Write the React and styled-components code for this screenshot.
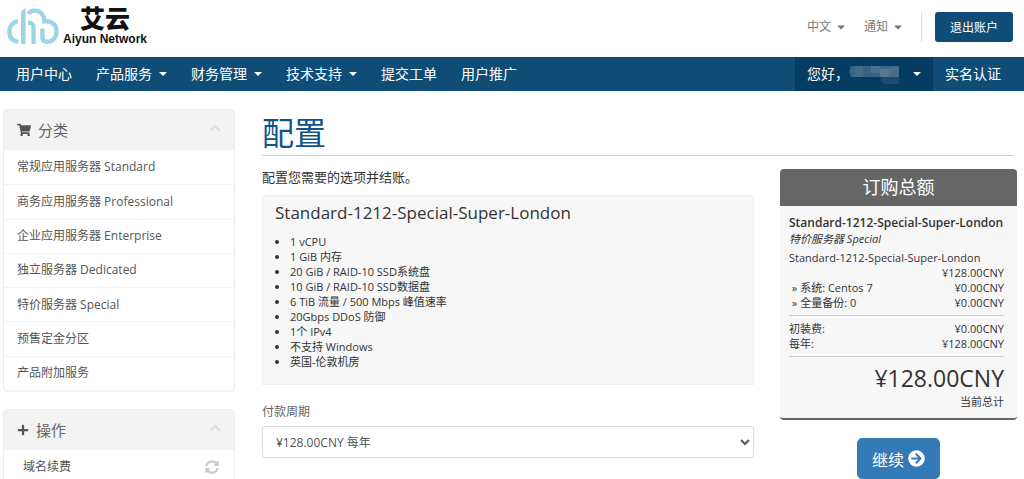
import React, { useState } from "react";
import styled, { createGlobalStyle } from "styled-components";
import {
  FaShoppingCart,
  FaPlus,
  FaSyncAlt,
  FaArrowCircleRight,
  FaChevronUp,
  FaCaretDown,
} from "react-icons/fa";

const categories = [
  "常规应用服务器 Standard",
  "商务应用服务器 Professional",
  "企业应用服务器 Enterprise",
  "独立服务器 Dedicated",
  "特价服务器 Special",
  "预售定金分区",
  "产品附加服务",
];

const menu = [
  { label: "用户中心" },
  { label: "产品服务", caret: true },
  { label: "财务管理", caret: true },
  { label: "技术支持", caret: true },
  { label: "提交工单" },
  { label: "用户推广" },
];

const specs = [
  "1 vCPU",
  "1 GiB 内存",
  "20 GiB / RAID-10 SSD系统盘",
  "10 GiB / RAID-10 SSD数据盘",
  "6 TiB 流量 / 500 Mbps 峰值速率",
  "20Gbps DDoS 防御",
  "1个 IPv4",
  "不支持 Windows",
  "英国-伦敦机房",
];

function Logo() {
  return (
    <Brand href="#">
      <svg width="53" height="38" viewBox="0 0 53 38" fill="none" stroke="#9bd5e7" strokeWidth="4.4">
        <path d="M11 13.2 C5 14 2.4 19 2.4 24 C2.4 29.5 6 33.4 11.5 33.9" />
        <path d="M14 3.5 L18.6 0 V36 H14 Z" fill="#9bd5e7" stroke="none" />
        <path d="M21.2 5.8 C24 2 33 0 37 9.5 L37.4 13.4 C45 12.4 49.6 17 49.6 23.5 C49.6 29.5 45.5 33.8 39.8 33.8" />
        <path d="M21 14.5 C26 14.5 26.6 17 26.6 21 V36" />
        <path d="M35.4 20.5 V30 Q35.6 33.8 40 33.8" />
      </svg>
      <BrandName>
        <strong>艾云</strong>
        <span>Aiyun Network</span>
      </BrandName>
    </Brand>
  );
}

function HiddenName() {
  return (
    <svg width="50" height="22" viewBox="0 0 50 22">
      <path d="M2 3 H50 V14 H2 Q-1 9 2 3Z" fill="#3a6282" />
      <rect x="6" y="3" width="8" height="11" fill="#456b89" />
      <rect x="22" y="3" width="9" height="7" fill="#4c718d" />
      <rect x="31" y="6" width="9" height="8" fill="#55778f" />
      <rect x="40" y="4" width="10" height="11" fill="#486e8b" />
      <path d="M32 14 H50 V21 H35 Q31 19 32 14Z" fill="#1d4b70" />
    </svg>
  );
}

function App() {
  const [cycle, setCycle] = useState("year");

  return (
    <>
      <GlobalStyle />
      <Header>
        <Logo />
        <TopNav>
          <TopLink href="#">中文 <FaCaretDown /></TopLink>
          <TopLink href="#">通知 <FaCaretDown /></TopLink>
          <LogoutBox>
            <LogoutButton>退出账户</LogoutButton>
          </LogoutBox>
        </TopNav>
      </Header>

      <NavBar>
        <NavGroup>
          {menu.map((item) => (
            <NavLink href="#" key={item.label}>
              {item.label}
              {item.caret && <Caret />}
            </NavLink>
          ))}
        </NavGroup>
        <NavGroup>
          <NavLink href="#" $active>
            您好，<HiddenName />
            <Caret $wide />
          </NavLink>
          <NavLink href="#">实名认证</NavLink>
        </NavGroup>
      </NavBar>

      <Body>
        <Sidebar>
          <Panel>
            <PanelHead>
              <FaShoppingCart />
              <h3>分类</h3>
              <Chevron />
            </PanelHead>
            <PanelList>
              {categories.map((name) => (
                <PanelLink href="#" key={name}>{name}</PanelLink>
              ))}
            </PanelList>
          </Panel>
          <Panel>
            <PanelHead>
              <FaPlus size="12" />
              <h3>操作</h3>
              <Chevron />
            </PanelHead>
            <PanelLink href="#" $indent>
              域名续费 <FaSyncAlt />
            </PanelLink>
          </Panel>
        </Sidebar>

        <Main>
          <Title>配置</Title>
          <Columns>
            <Config>
              <Intro>配置您需要的选项并结账。</Intro>
              <Product>
                <h2>Standard-1212-Special-Super-London</h2>
                <ul>
                  {specs.map((spec) => (
                    <li key={spec}>{spec}</li>
                  ))}
                </ul>
              </Product>
              <Label htmlFor="cycle">付款周期</Label>
              <Select id="cycle" value={cycle} onChange={(e) => setCycle(e.target.value)}>
                <option value="year">¥128.00CNY 每年</option>
              </Select>
            </Config>

            <SummaryColumn>
              <Summary>
                <h2>订购总额</h2>
                <SummaryBody>
                  <ProductName>Standard-1212-Special-Super-London</ProductName>
                  <ProductGroup>特价服务器 Special</ProductGroup>
                  <Line>
                    <span>Standard-1212-Special-Super-London</span>
                    <Price>¥128.00CNY</Price>
                  </Line>
                  <Line>
                    <span>&nbsp;» 系统: Centos 7</span>
                    <Price>¥0.00CNY</Price>
                  </Line>
                  <Line>
                    <span>&nbsp;» 全量备份: 0</span>
                    <Price>¥0.00CNY</Price>
                  </Line>
                  <Fees>
                    <Line>
                      <span>初装费:</span>
                      <Price>¥0.00CNY</Price>
                    </Line>
                    <Line>
                      <span>每年:</span>
                      <Price>¥128.00CNY</Price>
                    </Line>
                  </Fees>
                  <Total>
                    <strong>¥128.00CNY</strong>
                    <span>当前总计</span>
                  </Total>
                </SummaryBody>
              </Summary>
              <ContinueButton>
                继续 <FaArrowCircleRight size="17" />
              </ContinueButton>
            </SummaryColumn>
          </Columns>
        </Main>
      </Body>
    </>
  );
}

export default App;

const GlobalStyle = createGlobalStyle`
  * {
    box-sizing: border-box;
  }

  html {
    scrollbar-width: none;
  }

  body {
    margin: 0;
    background: #fff;
    color: #333;
    font-family: "Open Sans", "Noto Sans CJK SC", sans-serif;
    font-size: 12px;
    line-height: 18px;
  }

  h1, h2, h3, p, ul {
    margin: 0;
    font-weight: 400;
  }

  a {
    color: inherit;
    text-decoration: none;
  }

  button, select {
    font-family: inherit;
  }
`;

const Header = styled.header`
  display: flex;
  justify-content: space-between;
  align-items: center;
  height: 57px;
  padding: 0 11px 4px 7px;
`;

const Brand = styled.a`
  display: flex;
  align-items: center;
  gap: 3px;
`;

const BrandName = styled.span`
  display: flex;
  flex-direction: column;
  align-items: center;
  color: #111;

  strong {
    font-size: 25px;
    font-weight: 900;
    line-height: 25px;
  }

  span {
    font-family: "Liberation Sans", sans-serif;
    font-size: 12px;
    font-weight: 700;
    line-height: 16px;
  }
`;

const TopNav = styled.div`
  display: flex;
  align-items: center;
`;

const TopLink = styled.a`
  display: flex;
  align-items: center;
  gap: 4px;
  margin-right: 17px;
  color: #777;
`;

const LogoutBox = styled.div`
  padding-left: 13px;
  border-left: 1px solid #ddd;
`;

const LogoutButton = styled.button`
  display: block;
  height: 30px;
  padding: 0 15px;
  border: 0;
  border-radius: 3px;
  background: #0f4d77;
  color: #fff;
  font-size: 12px;
`;

const NavBar = styled.nav`
  display: flex;
  justify-content: space-between;
  height: 34px;
  padding: 0 11px 0 4px;
  background: #0f4d77;
`;

const NavGroup = styled.div`
  display: flex;
`;

const NavLink = styled.a`
  display: flex;
  align-items: center;
  padding: 0 12px;
  background: ${(props) => (props.$active ? "#053c62" : "transparent")};
  color: #fff;
  font-size: 14px;
`;

const Caret = styled.i`
  margin-left: ${(props) => (props.$wide ? "14px" : "7px")};
  border: 4px solid transparent;
  border-top-color: currentColor;
  border-bottom: 0;
`;

const Body = styled.div`
  display: grid;
  grid-template-columns: 232px 1fr;
  gap: 27px;
  padding: 18px 7px 0 3px;
`;

const Sidebar = styled.aside`
  display: flex;
  flex-direction: column;
  gap: 18px;
`;

const Panel = styled.section`
  border: 1px solid #eee;
  border-radius: 4px;
  box-shadow: 0 1px 1px rgba(0, 0, 0, 0.05);
  overflow: hidden;
`;

const PanelHead = styled.div`
  display: flex;
  align-items: center;
  gap: 7px;
  height: 40px;
  padding: 0 13px;
  background: #f3f3f3;
  color: #555;
  font-size: 14px;

  h3 {
    flex: 1;
    color: #666;
    font-size: 15px;
  }
`;

const Chevron = styled(FaChevronUp)`
  margin-bottom: 4px;
  color: #ddd;
  font-size: 12px;
`;

const PanelList = styled.div`
  display: grid;
  min-height: 240px;
`;

const PanelLink = styled.a`
  display: flex;
  justify-content: space-between;
  align-items: center;
  min-height: 34px;
  padding: 0 15px 0 ${(props) => (props.$indent ? "19px" : "13px")};
  color: #555;

  & + & {
    border-top: 1px solid #f3f3f3;
  }

  svg {
    color: #ccc;
    font-size: 14px;
  }
`;

const Main = styled.main`
  min-width: 0;
`;

const Title = styled.h1`
  margin-right: 4px;
  padding-top: 1px;
  border-bottom: 1px solid #ccc;
  color: #0f5586;
  font-size: 32px;
  line-height: 45px;
`;

const Columns = styled.div`
  display: grid;
  grid-template-columns: 1fr 237px;
  gap: 26px;
  padding-top: 13px;
`;

const Config = styled.div`
  display: flex;
  flex-direction: column;
`;

const Intro = styled.p`
  font-size: 13px;
  line-height: 17px;
`;

const Product = styled.div`
  margin: 9px 0 18px;
  padding: 5px 12px 15px;
  border: 1px solid #f0f0f0;
  background: #f7f7f7;

  h2 {
    font-size: 17px;
    line-height: 24px;
  }

  ul {
    padding: 9px 0 0 15px;
    font-size: 11px;
    line-height: 15px;
  }
`;

const Label = styled.label`
  margin-bottom: 5px;
  color: #666;
`;

const Select = styled.select`
  height: 32px;
  padding: 0 9px;
  border: 1px solid #ddd;
  border-radius: 3px;
  background: #fff;
  color: #555;
  font-size: 12px;
`;

const SummaryColumn = styled.div`
  display: flex;
  flex-direction: column;
  align-items: center;
  gap: 18px;
`;

const Summary = styled.section`
  width: 100%;
  border-bottom: 2px solid #666;
  border-radius: 4px;
  background: #f7f7f7;
  overflow: hidden;

  h2 {
    background: #666;
    color: #fff;
    font-size: 18px;
    line-height: 37px;
    text-align: center;
  }
`;

const SummaryBody = styled.div`
  padding: 8px 13px 9px 9px;
  font-size: 11px;
  line-height: 15px;
`;

const ProductName = styled.div`
  font-size: 12px;
  font-weight: 600;
  line-height: 17px;
  white-space: nowrap;
`;

const ProductGroup = styled.div`
  margin-bottom: 4px;
  font-style: italic;
`;

const Line = styled.div`
  display: flex;
  flex-wrap: wrap;
`;

const Price = styled.span`
  margin-left: auto;
`;

const Fees = styled.div`
  margin: 5px 0;
  padding: 5px 0;
  border: solid #ccc;
  border-width: 1px 0;
`;

const Total = styled.div`
  display: flex;
  flex-direction: column;
  align-items: flex-end;

  strong {
    font-size: 23px;
    font-weight: 400;
    line-height: 32px;
  }
`;

const ContinueButton = styled.button`
  display: flex;
  align-items: center;
  gap: 4px;
  height: 41px;
  padding: 0 14px;
  border: 1px solid #337ab7;
  border-radius: 5px;
  background: #337ab7;
  color: #fff;
  font-size: 16px;
`;
